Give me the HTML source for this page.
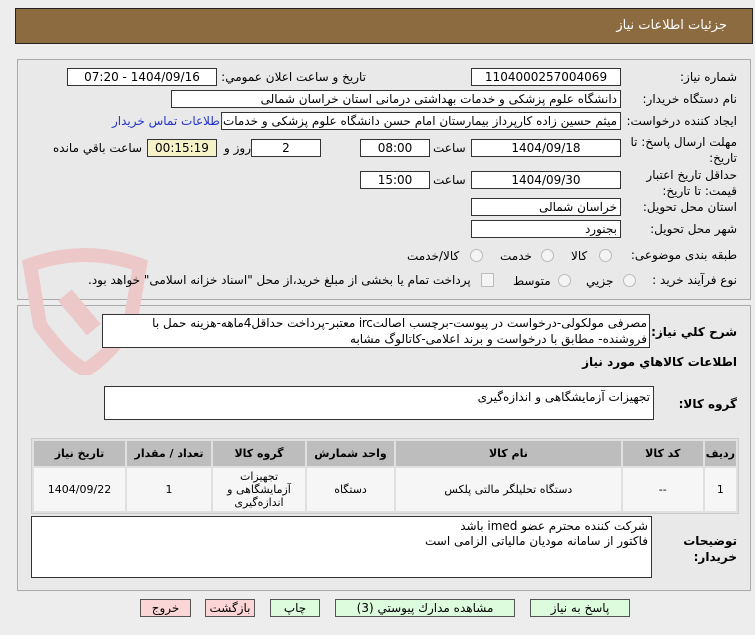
<!DOCTYPE html>
<html><head><meta charset="utf-8"><style>
body{margin:0;width:755px;height:635px;background:#ededed;position:relative;overflow:hidden;font-family:Tahoma,"DejaVu Sans","Liberation Sans",sans-serif;font-size:12px;color:#000}
.a{position:absolute}
.hdr{left:15px;top:8px;width:736px;height:34px;background:#8c6b40;border:1px solid #222}
.pn{border:1px solid #aaa;background:#e9e9e9}
.bx{position:absolute;background:#fff;border:1px solid #333;box-sizing:border-box;height:18px;line-height:16px;direction:rtl;padding:0 3px;white-space:nowrap;overflow:hidden}
.c{text-align:center}
.l{position:absolute;direction:rtl;white-space:nowrap}
.rd{position:absolute;width:11px;height:11px;border-radius:50%;border:1px solid #bbb;background:#f4f4f4}
table{border-collapse:separate;border-spacing:2px;position:absolute;direction:rtl;background:#e0e0e0;border:1px solid #ccc}
th{background:#bdbdbd;font-weight:bold;height:23px;font-size:11px}
td{background:#f6f6f6;text-align:center;height:41px;font-size:11px}
.btn{position:absolute;top:599px;height:18px;border:1px solid #555;box-sizing:border-box;text-align:center;line-height:16px;direction:rtl}
</style></head><body>
<div class="a hdr"></div>
<div class="l" style="right:28px;top:18px;color:#fff;font-size:13px">جزئيات اطلاعات نياز</div>
<div class="a pn" style="left:17px;top:59px;width:732px;height:239px"></div>
<div class="a pn" style="left:17px;top:305px;width:732px;height:284px"></div>
<svg class="a" style="left:15px;top:245px" width="140" height="130" viewBox="0 0 140 130"><path d="M15 20 Q70 0 125 20 L115 80 Q90 115 70 125 Q50 115 25 80 Z" fill="none" stroke="#ecc8c8" stroke-width="14"/><rect x="55" y="45" width="18" height="45" fill="#ecc8c8" transform="rotate(-40 64 67)"/></svg>

<div class="l" style="right:18px;top:70px">شماره نياز:</div>
<div class="bx c" style="left:471px;top:68px;width:150px">1104000257004069</div>
<div class="l" style="right:389px;top:70px">تاريخ و ساعت اعلان عمومي:</div>
<div class="bx c" style="left:67px;top:68px;width:150px">1404/09/16 - 07:20</div>

<div class="l" style="right:18px;top:92px">نام دستگاه خريدار:</div>
<div class="bx" style="left:171px;top:90px;width:450px">دانشگاه علوم پزشکی و خدمات بهداشتی درمانی استان خراسان شمالی</div>

<div class="l" style="right:18px;top:114px">ايجاد كننده درخواست:</div>
<div class="bx" style="left:221px;top:112px;width:400px">میثم  حسین زاده  کارپرداز بیمارستان امام حسن دانشگاه علوم پزشکی و خدمات</div>
<div class="l" style="left:112px;top:114px;color:#2233cc">اطلاعات تماس خريدار</div>

<div class="l" style="right:18px;top:134px;line-height:16px;text-align:right">مهلت ارسال پاسخ: تا<br>تاريخ:</div>
<div class="bx c" style="left:471px;top:139px;width:150px">1404/09/18</div>
<div class="l" style="left:433px;top:141px">ساعت</div>
<div class="bx c" style="left:360px;top:139px;width:70px">08:00</div>
<div class="bx c" style="left:251px;top:139px;width:70px">2</div>
<div class="l" style="left:224px;top:141px">روز و</div>
<div class="bx c" style="left:147px;top:139px;width:70px;background:#f5f2c8">00:15:19</div>
<div class="l" style="left:53px;top:141px">ساعت باقي مانده</div>

<div class="l" style="right:18px;top:167px;line-height:16px;text-align:right">حداقل تاريخ اعتبار<br>قيمت: تا تاريخ:</div>
<div class="bx c" style="left:471px;top:171px;width:150px">1404/09/30</div>
<div class="l" style="left:433px;top:173px">ساعت</div>
<div class="bx c" style="left:360px;top:171px;width:70px">15:00</div>

<div class="l" style="right:18px;top:200px">استان محل تحويل:</div>
<div class="bx" style="left:471px;top:198px;width:150px">خراسان شمالی</div>
<div class="l" style="right:18px;top:222px">شهر محل تحويل:</div>
<div class="bx" style="left:471px;top:220px;width:150px">بجنورد</div>

<div class="l" style="right:18px;top:248px">طبقه بندی موضوعی:</div>
<div class="rd" style="left:599px;top:249px"></div><div class="l" style="left:571px;top:249px">كالا</div>
<div class="rd" style="left:541px;top:249px"></div><div class="l" style="left:500px;top:249px">خدمت</div>
<div class="rd" style="left:470px;top:249px"></div><div class="l" style="left:407px;top:249px">كالا/خدمت</div>

<div class="l" style="right:18px;top:273px">نوع فرآيند خريد :</div>
<div class="rd" style="left:623px;top:274px"></div><div class="l" style="left:586px;top:274px">جزيي</div>
<div class="rd" style="left:558px;top:274px"></div><div class="l" style="left:513px;top:274px">متوسط</div>
<div class="a" style="left:481px;top:273px;width:11px;height:12px;border:1px solid #bbb;background:#f4f4f4"></div>
<div class="l" style="left:88px;top:273px">پرداخت تمام يا بخشی از مبلغ خريد،از محل "اسناد خزانه اسلامی" خواهد بود.</div>

<div class="l" style="right:18px;top:325px;font-weight:bold">شرح كلي نياز:</div>
<div class="bx" style="left:102px;top:314px;width:548px;height:34px;line-height:16px;white-space:normal;padding:0 2px;letter-spacing:-0.3px">مصرفی مولکولی-درخواست در پیوست-برچسب اصالتirc معتبر-پرداخت حداقل4ماهه-هزینه حمل با فروشنده- مطابق با درخواست و برند اعلامی-کاتالوگ مشابه</div>
<div class="l" style="right:18px;top:355px;font-weight:bold">اطلاعات كالاهاي مورد نياز</div>
<div class="l" style="right:18px;top:397px;font-weight:bold">گروه كالا:</div>
<div class="bx" style="left:104px;top:386px;width:550px;height:34px;padding-top:2px">تجهیزات آزمایشگاهی و اندازه‌گیری</div>

<table style="left:31px;top:438px;width:708px">
<tr><th style="width:26px">رديف</th><th style="width:78px">كد كالا</th><th>نام كالا</th><th style="width:85px">واحد شمارش</th><th style="width:90px">گروه كالا</th><th style="width:82px">تعداد / مقدار</th><th style="width:89px">تاريخ نياز</th></tr>
<tr><td>1</td><td>--</td><td>دستگاه تحلیلگر مالتی پلکس</td><td>دستگاه</td><td style="line-height:13px">تجهیزات<br>آزمایشگاهی و<br>اندازه‌گیری</td><td>1</td><td>1404/09/22</td></tr>
</table>

<div class="l" style="right:18px;top:533px;font-weight:bold;line-height:16px;text-align:right">توضيحات<br>خريدار:</div>
<div class="bx" style="left:31px;top:516px;width:621px;height:62px;line-height:15px;white-space:normal;padding-top:2px">شرکت کننده محترم عضو imed باشد<br>فاکتور از سامانه مودیان مالیاتی الزامی است</div>

<div class="btn" style="left:140px;width:51px;background:#fcd6d6">خروج</div>
<div class="btn" style="left:205px;width:50px;background:#fcd6d6">بازگشت</div>
<div class="btn" style="left:270px;width:50px;background:#ddfbdd">چاپ</div>
<div class="btn" style="left:335px;width:180px;background:#ddfbdd">مشاهده مدارك پيوستي (3)</div>
<div class="btn" style="left:530px;width:100px;background:#ddfbdd">پاسخ به نياز</div>
</body></html>
